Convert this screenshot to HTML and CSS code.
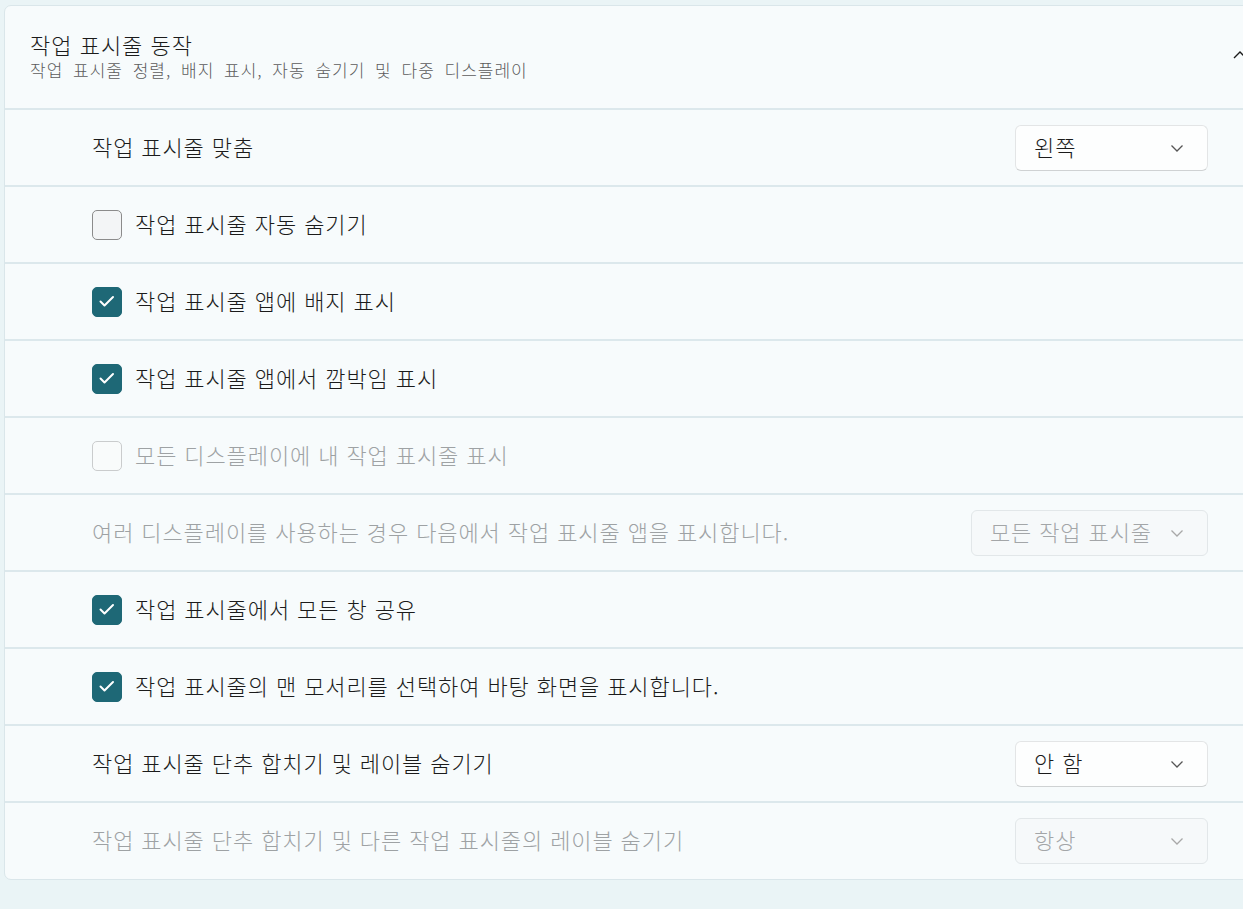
FILE: index.html
```html
<!DOCTYPE html>
<html lang="ko">
<head>
<meta charset="utf-8">
<link rel="stylesheet" href="styles.css">
</head>
<body>
<div class="card">
  <div class="header">
    <div class="header-text">
      <div class="title">작업 표시줄 동작</div>
      <div class="subtitle">작업 표시줄 정렬, 배지 표시, 자동 숨기기 및 다중 디스플레이</div>
    </div>
    <svg class="collapse" width="14" height="14" viewBox="0 0 14 14"><path d="M1 10 L7 4 L13 10" fill="none" stroke="#1a1a1a" stroke-width="1.4"/></svg>
  </div>

  <div class="row">
    <span class="label">작업 표시줄 맞춤</span>
    <div class="select"><span>왼쪽</span><svg class="chev" width="14" height="14" viewBox="0 0 14 14"><path d="M1.5 4.5 L7 10 L12.5 4.5" fill="none" stroke="#555" stroke-width="1.3"/></svg></div>
  </div>

  <div class="row">
    <span class="box"></span>
    <span class="label">작업 표시줄 자동 숨기기</span>
  </div>

  <div class="row">
    <span class="box checked"><svg width="30" height="30" viewBox="0 0 30 30"><path d="M8.5 15.5 L12.5 19.5 L21 11" fill="none" stroke="#fff" stroke-width="2" stroke-linecap="round" stroke-linejoin="round"/></svg></span>
    <span class="label">작업 표시줄 앱에 배지 표시</span>
  </div>

  <div class="row">
    <span class="box checked"><svg width="30" height="30" viewBox="0 0 30 30"><path d="M8.5 15.5 L12.5 19.5 L21 11" fill="none" stroke="#fff" stroke-width="2" stroke-linecap="round" stroke-linejoin="round"/></svg></span>
    <span class="label">작업 표시줄 앱에서 깜박임 표시</span>
  </div>

  <div class="row disabled">
    <span class="box"></span>
    <span class="label">모든 디스플레이에 내 작업 표시줄 표시</span>
  </div>

  <div class="row disabled">
    <span class="label">여러 디스플레이를 사용하는 경우 다음에서 작업 표시줄 앱을 표시합니다.</span>
    <div class="select"><span>모든 작업 표시줄</span><svg class="chev" width="14" height="14" viewBox="0 0 14 14"><path d="M1.5 4.5 L7 10 L12.5 4.5" fill="none" stroke="#a8a8a8" stroke-width="1.3"/></svg></div>
  </div>

  <div class="row">
    <span class="box checked"><svg width="30" height="30" viewBox="0 0 30 30"><path d="M8.5 15.5 L12.5 19.5 L21 11" fill="none" stroke="#fff" stroke-width="2" stroke-linecap="round" stroke-linejoin="round"/></svg></span>
    <span class="label">작업 표시줄에서 모든 창 공유</span>
  </div>

  <div class="row">
    <span class="box checked"><svg width="30" height="30" viewBox="0 0 30 30"><path d="M8.5 15.5 L12.5 19.5 L21 11" fill="none" stroke="#fff" stroke-width="2" stroke-linecap="round" stroke-linejoin="round"/></svg></span>
    <span class="label">작업 표시줄의 맨 모서리를 선택하여 바탕 화면을 표시합니다.</span>
  </div>

  <div class="row">
    <span class="label">작업 표시줄 단추 합치기 및 레이블 숨기기</span>
    <div class="select"><span>안 함</span><svg class="chev" width="14" height="14" viewBox="0 0 14 14"><path d="M1.5 4.5 L7 10 L12.5 4.5" fill="none" stroke="#555" stroke-width="1.3"/></svg></div>
  </div>

  <div class="row disabled">
    <span class="label">작업 표시줄 단추 합치기 및 다른 작업 표시줄의 레이블 숨기기</span>
    <div class="select"><span>항상</span><svg class="chev" width="14" height="14" viewBox="0 0 14 14"><path d="M1.5 4.5 L7 10 L12.5 4.5" fill="none" stroke="#a8a8a8" stroke-width="1.3"/></svg></div>
  </div>
</div>
</body>
</html>
```

FILE: styles.css
```css
html, body {
  margin: 0;
  padding: 0;
  background: #eaf4f6;
  overflow: hidden;
  height: 909px;
}
body {
  padding: 5px 0 0 4px;
  font-family: "Noto Sans CJK KR", "Noto Sans", sans-serif;
  font-weight: 300;
  color: #1b1b1b;
}
.card {
  width: 1280px;
  background: #f7fbfc;
  border: 1px solid #dae6ea;
  border-radius: 7px;
  box-sizing: border-box;
}
.header {
  height: 102px;
  display: flex;
  align-items: center;
  padding: 0 36px 0 25px;
  border-bottom: 2px solid #dce8ec;
}
.header-text {
  flex: 1;
  display: flex;
  flex-direction: column;
  margin-bottom: 3px;
}
.title {
  font-size: 22px;
  line-height: 28px;
  letter-spacing: 1px;
}
.subtitle {
  font-size: 17px;
  line-height: 24px;
  letter-spacing: 1px;
  word-spacing: 4px;
  color: #5c5c5c;
}
.collapse {
  margin-top: -4px;
}
.row {
  height: 75px;
  display: flex;
  align-items: center;
  padding: 0 75px 0 87px;
  border-bottom: 2px solid #dce8ec;
}
.row:last-child {
  border-bottom: none;
  height: 76px;
}
.label {
  flex: 1;
  font-size: 22px;
  line-height: 28px;
  letter-spacing: 0.9px;
  margin-bottom: 4px;
}
.box {
  width: 30px;
  height: 30px;
  box-sizing: border-box;
  border: 1.5px solid #8b8b8b;
  border-radius: 5px;
  background: #f3f5f6;
  margin-right: 13px;
  display: flex;
}
.box.checked {
  background: #1e6876;
  border-color: #1e6876;
}
.box svg {
  margin: -1.5px;
}
.disabled .label {
  color: #9ea2a4;
}
.disabled .box {
  border-color: #cacccd;
  background: #f9fbfb;
}
.select {
  min-width: 193px;
  height: 46px;
  box-sizing: border-box;
  display: flex;
  align-items: center;
  justify-content: space-between;
  padding: 0 23px 0 18px;
  background: #fdfefe;
  border: 1px solid #e3e5e6;
  border-bottom-color: #cfd2d3;
  border-radius: 6px;
  font-size: 22px;
  letter-spacing: 0.9px;
  gap: 18px;
}
.select span {
  line-height: 28px;
  margin-bottom: 4px;
}
.disabled .select {
  background: #f6f9fa;
  border-color: #e2e7e9;
  color: #a3a6a8;
}
```
